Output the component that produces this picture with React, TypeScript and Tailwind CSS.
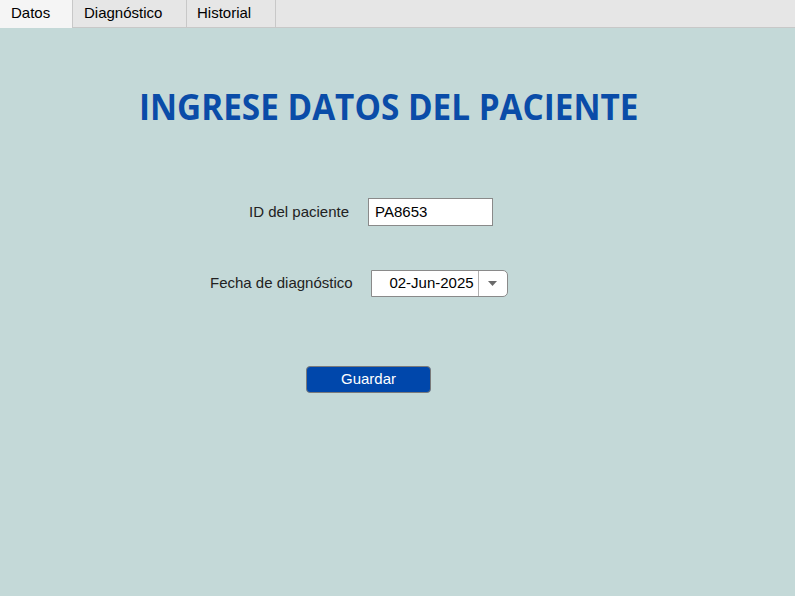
import React from "react";

export default function App() {
  return (
    <div className="w-[795px] h-[596px] bg-[#c4d9d8] flex flex-col overflow-hidden" style={{ fontFamily: '"Liberation Sans", Arial, sans-serif' }}>
      <div className="h-[28px] flex bg-[#e6e6e6] shrink-0">
        <div className="w-[73px] h-[28px] bg-[#f5f5f5] border-r border-[#c8c8c8] pl-[11px] pt-[4px] text-[15px] leading-[18px] text-black">Datos</div>
        <div className="w-[114px] h-[28px] border-r border-b border-[#c8c8c8] pl-[11px] pt-[4px] text-[15px] leading-[18px] text-black">Diagnóstico</div>
        <div className="w-[89px] h-[28px] border-r border-b border-[#c8c8c8] pl-[10px] pt-[4px] text-[15px] leading-[18px] text-black">Historial</div>
        <div className="flex-1 h-[28px] border-b border-[#c8c8c8]"></div>
      </div>
      <div className="flex flex-col">
        <div className="pl-[139px] mt-[55px] h-[48px] text-[36px] leading-[48px] font-bold text-[#0a4ca8] whitespace-nowrap">
          <div className="origin-left scale-x-[0.925] w-[540px]" style={{ fontFamily: '"Open Sans", sans-serif' }}>INGRESE DATOS DEL PACIENTE</div>
        </div>
        <div className="flex items-center mt-[67px] ml-[249px] h-[28px]">
          <span className="text-[15px] text-[#222]">ID del paciente</span>
          <div className="ml-[19px] w-[125px] h-[28px] bg-white border border-[#8a8a8a] flex items-center pl-[6px] text-[15px] text-black">PA8653</div>
        </div>
        <div className="flex items-center mt-[44px] ml-[210px] h-[27px]">
          <span className="text-[15px] text-[#222]">Fecha de diagnóstico</span>
          <div className="ml-[18px] w-[137px] h-[27px] bg-white border border-[#8a8a8a] rounded-r-[5px] flex">
            <div className="w-[107px] h-full flex items-center justify-end pr-[4px] text-[15px] text-black border-r border-[#b0b0b0]">02-Jun-2025</div>
            <div className="flex-1 flex items-center justify-center">
              <svg width="9" height="5" viewBox="0 0 9 5"><path d="M0 0 L9 0 L4.5 5 Z" fill="#6a6a6a" /></svg>
            </div>
          </div>
        </div>
        <div className="mt-[69px] ml-[306px]">
          <div className="w-[125px] h-[27px] bg-[#0047ab] border border-[#7a7a7a] rounded-[4px] flex items-center justify-center text-[15px] text-white">Guardar</div>
        </div>
      </div>
    </div>
  );
}
